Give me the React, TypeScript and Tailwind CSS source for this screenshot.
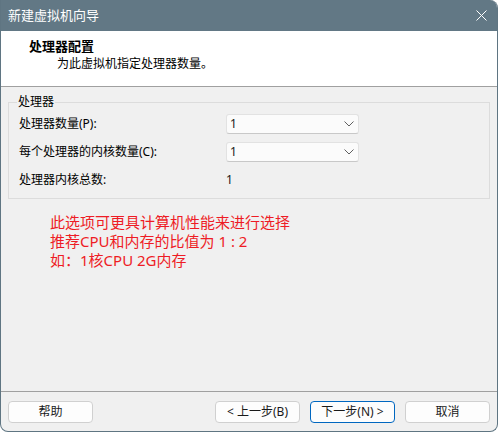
import React from 'react';

const font = { fontFamily: '"Noto Sans", "Noto Sans CJK SC", sans-serif' };

function Chevron() {
  return (
    <svg width="10" height="6" viewBox="0 0 10 6" className="shrink-0">
      <path d="M0.5 0.5 L5 5 L9.5 0.5" fill="none" stroke="#606060" strokeWidth="1" />
    </svg>
  );
}

function ComboBox({ value }: { value: string }) {
  return (
    <div className="w-[133px] h-5 flex items-center justify-between pl-[3px] pr-[4px] bg-[#fbfbfb] border border-[#e2e2e2] border-b-[#c8c8c8] rounded-[3px]">
      <span className="text-[12px] leading-none text-[#1a1a1a]">{value}</span>
      <Chevron />
    </div>
  );
}

function Btn({ label, primary }: { label: string; primary?: boolean }) {
  return (
    <button
      className={
        'h-[22px] w-[85px] rounded-[4px] bg-[#fdfdfd] text-[12px] leading-none text-[#1a1a1a] flex items-center justify-center border ' +
        (primary ? 'border-[#0067c0]' : 'border-[#d0d0d0]')
      }
    >
      {label}
    </button>
  );
}

export default function App() {
  return (
    <div className="w-[499px] h-[433px] bg-white" style={font}>
      <div className="w-[498px] h-[432px] flex flex-col border border-t-0 border-[#5f7582] rounded-tr-[8px] rounded-b-[8px] overflow-hidden bg-[#f0f0f0]">
        {/* title bar */}
        <div className="h-[31px] shrink-0 bg-[#627885] flex items-center justify-between pl-[7px] pr-[10px]">
          <span className="text-[13px] leading-none text-white">新建虚拟机向导</span>
          <svg width="11" height="11" viewBox="0 0 11 11">
            <path d="M0.5 0.5 L10.5 10.5 M10.5 0.5 L0.5 10.5" stroke="white" strokeWidth="1" />
          </svg>
        </div>

        {/* header */}
        <div className="h-[56px] shrink-0 bg-white border-b border-[#a0a0a0] pl-[28px] pt-[6px]">
          <div className="text-[13px] font-bold leading-[18px] text-black">处理器配置</div>
          <div className="text-[12px] leading-[18px] text-black pl-[28px]">为此虚拟机指定处理器数量。</div>
        </div>

        {/* body */}
        <div className="flex-1 px-[7px] pt-[15px]">
          <div className="relative border border-[#dcdcdc] h-[97px] pt-[11px] pl-[10px]">
            <span className="absolute left-[8px] top-[-9px] bg-[#f0f0f0] px-[1px] text-[12px] leading-[16px] text-black">处理器</span>
            <div className="flex flex-col gap-2">
              <div className="h-5 flex items-center">
                <span className="w-[207px] text-[12px] leading-none text-black">处理器数量(P):</span>
                <ComboBox value="1" />
              </div>
              <div className="h-5 flex items-center">
                <span className="w-[207px] text-[12px] leading-none text-black">每个处理器的内核数量(C):</span>
                <ComboBox value="1" />
              </div>
              <div className="h-5 flex items-center">
                <span className="w-[207px] text-[12px] leading-none text-black">处理器内核总数:</span>
                <span className="text-[12px] leading-none text-[#1a1a1a]">1</span>
              </div>
            </div>
          </div>

          <div className="pl-[42px] pt-[14px] text-[15px] leading-[19px] text-[#ee1c25]">
            <div>此选项可更具计算机性能来进行选择</div>
            <div>推荐CPU和内存的比值为 1 : 2</div>
            <div>如：1核CPU 2G内存</div>
          </div>
        </div>

        {/* footer */}
        <div className="h-[40px] shrink-0 border-t border-[#a0a0a0] flex items-start pt-[9px] px-[7px]">
          <Btn label="帮助" />
          <div className="flex-1" />
          <div className="flex gap-[10px]">
            <Btn label="< 上一步(B)" />
            <Btn label="下一步(N) >" primary />
            <Btn label="取消" />
          </div>
        </div>
      </div>
    </div>
  );
}
